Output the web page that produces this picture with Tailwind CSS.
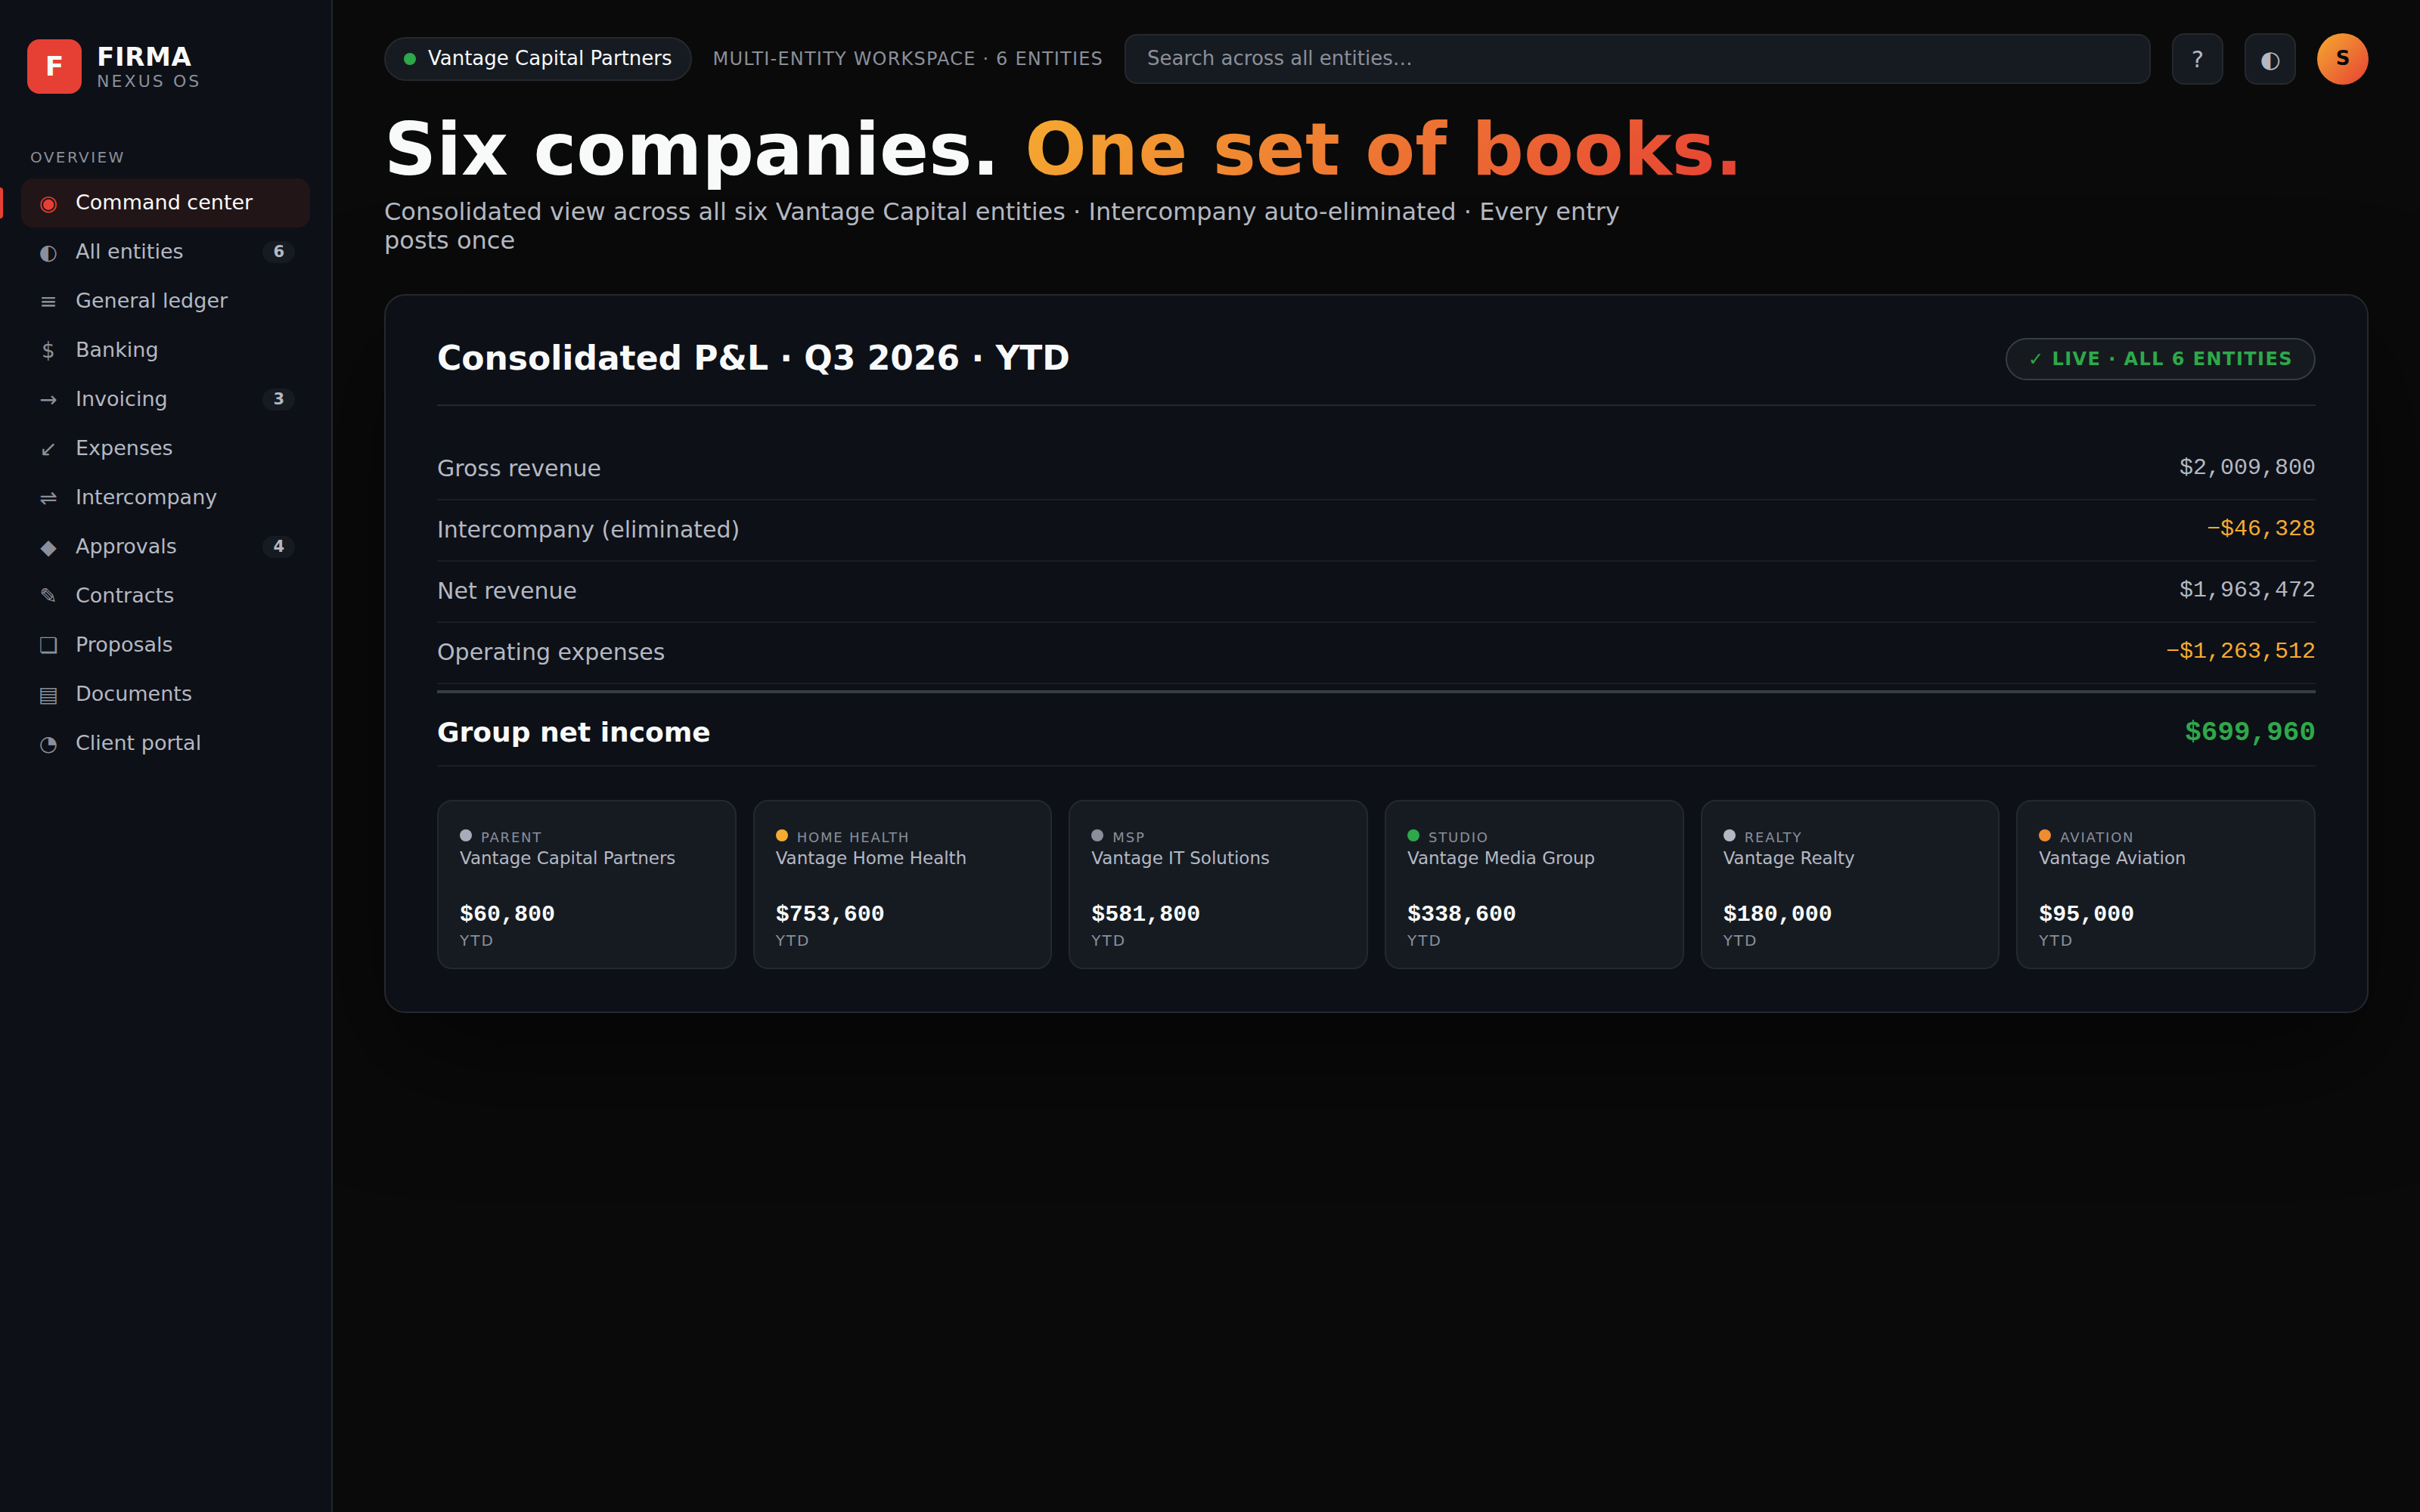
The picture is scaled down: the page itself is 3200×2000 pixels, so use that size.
<!DOCTYPE html>
<html lang="en">
<head>
    <meta charset="UTF-8">
    <meta name="viewport" content="width=device-width, initial-scale=1.0">
    <title>FIRMA Nexus OS - Command center</title>
    <script src="https://cdn.jsdelivr.net/npm/@tailwindcss/browser@4"></script>
</head>
<body class="bg-[#0a0a0a] text-[#f8fafa] font-['DejaVu_Sans',sans-serif]">
    <div class="flex w-[3200px] h-[2000px] overflow-hidden">
        <!-- Sidebar -->
        <aside class="relative z-10 w-[440px] shrink-0 bg-[#0d1017] border-r-2 border-[#25282d] px-7 pt-[52px]">
            <div class="flex items-center gap-5 pl-2 h-[72px]">
                <div class="w-[72px] h-[72px] rounded-[16px] bg-[#e64034] flex items-center justify-center text-[36px] leading-[42px] font-bold">F</div>
                <div>
                    <div class="text-[34px] leading-[40px] font-bold tracking-[0.02em]">FIRMA</div>
                    <div class="text-[22px] leading-[26px] tracking-[0.14em] text-[#8b8f9a]">NEXUS OS</div>
                </div>
            </div>
            <div class="mt-[72px] pl-3 text-[20px] leading-[24px] tracking-[0.12em] text-[#8b8f9a]">OVERVIEW</div>
            <nav class="mt-4 text-[27px] leading-[32px] text-[#b4b8c2]">
                <a class="relative flex items-center gap-5 h-[65px] px-5 rounded-[16px] bg-[#221517] text-[#f8fafa]">
                    <span class="absolute -left-7 top-3 bottom-3 w-1 rounded-r-[4px] bg-[#e64034]"></span>
                    <span class="w-8 pt-px text-center text-[28px] text-[#e64034]">◉</span>
                    <span class="pb-px">Command center</span>
                </a>
                <a class="flex items-center gap-5 h-[65px] px-5">
                    <span class="w-8 pt-px text-center text-[28px] text-[#8b8f9a]">◐</span>
                    <span class="pb-px">All entities</span>
                    <span class="ml-auto px-[14px] h-[29px] rounded-full bg-[#161b22] text-[21px] leading-[28px] font-bold">6</span>
                </a>
                <a class="flex items-center gap-5 h-[65px] px-5">
                    <span class="w-8 pt-px text-center text-[28px] text-[#8b8f9a]">≡</span>
                    <span class="pb-px">General ledger</span>
                </a>
                <a class="flex items-center gap-5 h-[65px] px-5">
                    <span class="w-8 pt-px text-center text-[28px] text-[#8b8f9a]">$</span>
                    <span class="pb-px">Banking</span>
                </a>
                <a class="flex items-center gap-5 h-[65px] px-5">
                    <span class="w-8 pt-px text-center text-[28px] text-[#8b8f9a]">→</span>
                    <span class="pb-px">Invoicing</span>
                    <span class="ml-auto px-[14px] h-[29px] rounded-full bg-[#161b22] text-[21px] leading-[28px] font-bold">3</span>
                </a>
                <a class="flex items-center gap-5 h-[65px] px-5">
                    <span class="w-8 pt-px text-center text-[28px] text-[#8b8f9a]">↙</span>
                    <span class="pb-px">Expenses</span>
                </a>
                <a class="flex items-center gap-5 h-[65px] px-5">
                    <span class="w-8 pt-px text-center text-[28px] text-[#8b8f9a]">⇌</span>
                    <span class="pb-px">Intercompany</span>
                </a>
                <a class="flex items-center gap-5 h-[65px] px-5">
                    <span class="w-8 pt-px text-center text-[28px] text-[#8b8f9a]">◆</span>
                    <span class="pb-px">Approvals</span>
                    <span class="ml-auto px-[14px] h-[29px] rounded-full bg-[#161b22] text-[21px] leading-[28px] font-bold">4</span>
                </a>
                <a class="flex items-center gap-5 h-[65px] px-5">
                    <span class="w-8 pt-px text-center text-[28px] text-[#8b8f9a]">✎</span>
                    <span class="pb-px">Contracts</span>
                </a>
                <a class="flex items-center gap-5 h-[65px] px-5">
                    <span class="w-8 pt-px text-center text-[28px] text-[#8b8f9a]">❏</span>
                    <span class="pb-px">Proposals</span>
                </a>
                <a class="flex items-center gap-5 h-[65px] px-5">
                    <span class="w-8 pt-px text-center text-[28px] text-[#8b8f9a]">▤</span>
                    <span class="pb-px">Documents</span>
                </a>
                <a class="flex items-center gap-5 h-[65px] px-5">
                    <span class="w-8 pt-px text-center text-[28px] text-[#8b8f9a]">◔</span>
                    <span class="pb-px">Client portal</span>
                </a>
            </nav>
        </aside>

        <!-- Main -->
        <main class="flex-1 min-w-0 px-[68px] pt-[44px]">
            <!-- Topbar -->
            <div class="flex items-center gap-7 h-[68px]">
                <div class="flex items-center gap-4 h-[58px] px-6 rounded-full border-2 border-[#25282d] bg-[#161b22] text-[26px] leading-[30px] whitespace-nowrap">
                    <span class="w-4 h-4 rounded-full bg-[#2ea84a]"></span>
                    <span class="pb-0.5">Vantage Capital Partners</span>
                </div>
                <div class="text-[24px] leading-[28px] tracking-[0.05em] text-[#8b8f9a] whitespace-nowrap">MULTI-ENTITY WORKSPACE · 6 ENTITIES</div>
                <div class="flex-1 flex items-center h-[66px] px-7 pb-0.5 rounded-[16px] border-2 border-[#25282d] bg-[#161b22] text-[26px] leading-[30px] text-[#8b8f9a]">Search across all entities…</div>
                <div class="w-[68px] h-[68px] rounded-[16px] border-2 border-[#25282d] bg-[#161b22] flex items-center justify-center text-[31px] leading-[36px] text-[#b4b8c2]">?</div>
                <div class="w-[68px] h-[68px] rounded-[16px] border-2 border-[#25282d] bg-[#161b22] flex items-center justify-center text-[31px] leading-[36px] text-[#b4b8c2]">◐</div>
                <div class="w-[68px] h-[68px] pb-0.5 rounded-full bg-[linear-gradient(135deg,#f5ab30,#e64034)] flex items-center justify-center text-[26px] leading-[30px] font-bold text-[#0a0a0a]">S</div>
            </div>

            <!-- Hero -->
            <h1 class="mt-[33px] text-[96px] leading-[106px] font-bold">Six companies. <span class="bg-[linear-gradient(135deg,#f5ab30,#e64034)] bg-clip-text text-transparent">One set of books.</span></h1>
            <p class="mt-2.5 max-w-[1680px] text-[32px] leading-[38px] text-[#b4b8c2]">Consolidated view across all six Vantage Capital entities · Intercompany auto-eliminated · Every entry posts once</p>

            <!-- Consolidated P&L -->
            <section class="mt-[52px] h-[951px] rounded-[28px] border-2 border-[#25282d] bg-[#0d1017] px-[68px] pt-14 shadow-[0_60px_160px_rgba(0,0,0,0.5)]">
                <div class="flex items-center justify-between h-[90px] pb-8 border-b-2 border-[#25282d]">
                    <h2 class="pb-0.5 text-[44px] leading-[50px] font-bold">Consolidated P&amp;L · Q3 2026 · YTD</h2>
                    <div class="h-14 px-7 rounded-full border-2 border-[#373e41] bg-[#161a1f] text-[24px] leading-[52px] font-bold tracking-[0.06em] text-[#2ea84a]">✓ LIVE · ALL 6 ENTITIES</div>
                </div>
                <div class="mt-11 text-[30px] leading-[36px] text-[#b4b8c2]">
                    <div class="flex items-center justify-between h-[81px] border-b-2 border-[#1a1d23]">
                        <span class="pb-px">Gross revenue</span>
                        <span class="pb-[3px] font-['Liberation_Mono',monospace]">$2,009,800</span>
                    </div>
                    <div class="flex items-center justify-between h-[81px] border-b-2 border-[#1a1d23]">
                        <span class="pb-px">Intercompany (eliminated)</span>
                        <span class="pb-[3px] font-['Liberation_Mono',monospace] text-[#f5ab30]">−$46,328</span>
                    </div>
                    <div class="flex items-center justify-between h-[81px] border-b-2 border-[#1a1d23]">
                        <span class="pb-px">Net revenue</span>
                        <span class="pb-[3px] font-['Liberation_Mono',monospace]">$1,963,472</span>
                    </div>
                    <div class="flex items-center justify-between h-[81px] border-b-2 border-[#1a1d23]">
                        <span class="pb-px">Operating expenses</span>
                        <span class="pb-[3px] font-['Liberation_Mono',monospace] text-[#f5ab30]">−$1,263,512</span>
                    </div>
                    <div class="flex items-center justify-between mt-2 h-[101px] pt-[9px] border-t-4 border-t-[#373e41] border-b-2 border-b-[#1a1d23] text-[36px] leading-[42px] font-bold">
                        <span class="text-[#f8fafa]">Group net income</span>
                        <span class="pt-0.5 font-['Liberation_Mono',monospace] text-[#2ea84a]">$699,960</span>
                    </div>
                </div>

                <!-- Entities -->
                <div class="mt-11 grid grid-cols-6 gap-[22px]">
                    <div class="h-[224px] rounded-[20px] border-2 border-[#25282d] bg-[#161b22] px-7 pt-[34px]">
                        <div class="flex items-start gap-3 h-[27px]">
                            <span class="mt-[3px] w-4 h-4 rounded-full bg-[#a8acb8]"></span>
                            <span class="text-[18px] leading-[28px] tracking-[0.1em] text-[#8b8f9a]">PARENT</span>
                        </div>
                        <div class="text-[23px] leading-[28px] text-[#b4b8c2]">Vantage Capital Partners</div>
                        <div class="mt-11 text-[30px] leading-[34px] font-bold font-['Liberation_Mono',monospace]">$60,800</div>
                        <div class="mt-[5px] text-[20px] leading-[24px] tracking-[0.1em] text-[#8b8f9a]">YTD</div>
                    </div>
                    <div class="h-[224px] rounded-[20px] border-2 border-[#25282d] bg-[#161b22] px-7 pt-[34px]">
                        <div class="flex items-start gap-3 h-[27px]">
                            <span class="mt-[3px] w-4 h-4 rounded-full bg-[#f5ab30]"></span>
                            <span class="text-[18px] leading-[28px] tracking-[0.1em] text-[#8b8f9a]">HOME HEALTH</span>
                        </div>
                        <div class="text-[23px] leading-[28px] text-[#b4b8c2]">Vantage Home Health</div>
                        <div class="mt-11 text-[30px] leading-[34px] font-bold font-['Liberation_Mono',monospace]">$753,600</div>
                        <div class="mt-[5px] text-[20px] leading-[24px] tracking-[0.1em] text-[#8b8f9a]">YTD</div>
                    </div>
                    <div class="h-[224px] rounded-[20px] border-2 border-[#25282d] bg-[#161b22] px-7 pt-[34px]">
                        <div class="flex items-start gap-3 h-[27px]">
                            <span class="mt-[3px] w-4 h-4 rounded-full bg-[#8b8f9a]"></span>
                            <span class="text-[18px] leading-[28px] tracking-[0.1em] text-[#8b8f9a]">MSP</span>
                        </div>
                        <div class="text-[23px] leading-[28px] text-[#b4b8c2]">Vantage IT Solutions</div>
                        <div class="mt-11 text-[30px] leading-[34px] font-bold font-['Liberation_Mono',monospace]">$581,800</div>
                        <div class="mt-[5px] text-[20px] leading-[24px] tracking-[0.1em] text-[#8b8f9a]">YTD</div>
                    </div>
                    <div class="h-[224px] rounded-[20px] border-2 border-[#25282d] bg-[#161b22] px-7 pt-[34px]">
                        <div class="flex items-start gap-3 h-[27px]">
                            <span class="mt-[3px] w-4 h-4 rounded-full bg-[#2ea84a]"></span>
                            <span class="text-[18px] leading-[28px] tracking-[0.1em] text-[#8b8f9a]">STUDIO</span>
                        </div>
                        <div class="text-[23px] leading-[28px] text-[#b4b8c2]">Vantage Media Group</div>
                        <div class="mt-11 text-[30px] leading-[34px] font-bold font-['Liberation_Mono',monospace]">$338,600</div>
                        <div class="mt-[5px] text-[20px] leading-[24px] tracking-[0.1em] text-[#8b8f9a]">YTD</div>
                    </div>
                    <div class="h-[224px] rounded-[20px] border-2 border-[#25282d] bg-[#161b22] px-7 pt-[34px]">
                        <div class="flex items-start gap-3 h-[27px]">
                            <span class="mt-[3px] w-4 h-4 rounded-full bg-[#b4b8c2]"></span>
                            <span class="text-[18px] leading-[28px] tracking-[0.1em] text-[#8b8f9a]">REALTY</span>
                        </div>
                        <div class="text-[23px] leading-[28px] text-[#b4b8c2]">Vantage Realty</div>
                        <div class="mt-11 text-[30px] leading-[34px] font-bold font-['Liberation_Mono',monospace]">$180,000</div>
                        <div class="mt-[5px] text-[20px] leading-[24px] tracking-[0.1em] text-[#8b8f9a]">YTD</div>
                    </div>
                    <div class="h-[224px] rounded-[20px] border-2 border-[#25282d] bg-[#161b22] px-7 pt-[34px]">
                        <div class="flex items-start gap-3 h-[27px]">
                            <span class="mt-[3px] w-4 h-4 rounded-full bg-[#f08c30]"></span>
                            <span class="text-[18px] leading-[28px] tracking-[0.1em] text-[#8b8f9a]">AVIATION</span>
                        </div>
                        <div class="text-[23px] leading-[28px] text-[#b4b8c2]">Vantage Aviation</div>
                        <div class="mt-11 text-[30px] leading-[34px] font-bold font-['Liberation_Mono',monospace]">$95,000</div>
                        <div class="mt-[5px] text-[20px] leading-[24px] tracking-[0.1em] text-[#8b8f9a]">YTD</div>
                    </div>
                </div>
            </section>
        </main>
    </div>
</body>
</html>
